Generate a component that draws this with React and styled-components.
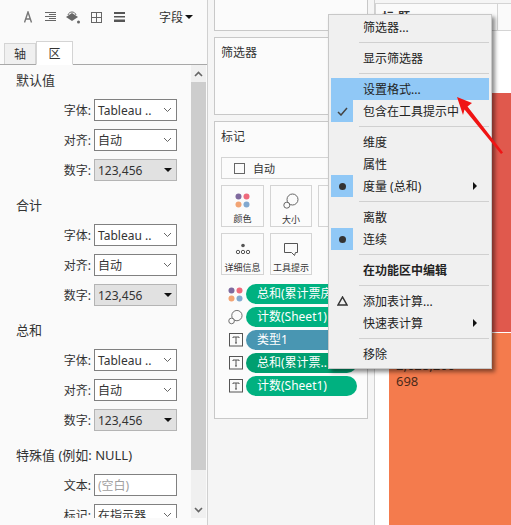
import styled, { createGlobalStyle } from 'styled-components'

const Global = createGlobalStyle`
    html, body {
        margin: 0;
        padding: 0;
        background: #f5f5f5;
    }
    body {
        font-family: "Noto Sans", "Noto Sans CJK SC", sans-serif;
        font-size: 12px;
        color: #333;
    }
`

const Page = styled.div`
    position: relative;
    width: 511px;
    height: 525px;
    overflow: hidden;
    display: flex;
`

/* left format pane */
const Pane = styled.div`
    width: 207px;
    height: 525px;
    flex: none;
    background: #fafafa;
    border-right: 1px solid #d0d0d0;
    overflow: hidden;
    display: flex;
    flex-direction: column;
`
const Toolbar = styled.div`
    height: 40px;
    box-sizing: border-box;
    flex: none;
    display: flex;
    align-items: center;
    padding: 0 14px 6px 24px;
    gap: 10px;
    color: #666;
`
const FieldMenu = styled.div`
    margin-left: auto;
    color: #333;
    display: flex;
    align-items: center;
    gap: 2px;
    white-space: nowrap;
`
const Caret = styled.span`
    display: inline-block;
    flex: none;
    width: 0;
    height: 0;
    border-left: 4px solid transparent;
    border-right: 4px solid transparent;
    border-top: 4px solid ${p => p.$color || '#111'};
`
const Tabs = styled.div`
    height: 24px;
    flex: none;
    display: flex;
    align-items: flex-end;
    padding-left: 4px;
    border-bottom: 1px solid #a8a8a8;
`
const Tab = styled.div`
    height: ${p => (p.$active ? '24px' : '21px')};
    width: ${p => (p.$active ? '37px' : '32px')};
    box-sizing: border-box;
    display: flex;
    align-items: center;
    justify-content: center;
    background: ${p => (p.$active ? '#fff' : '#f0f0f0')};
    border: 1px solid #d4d4d4;
    border-bottom: ${p => (p.$active ? '1px solid #fff' : 'none')};
    margin-bottom: ${p => (p.$active ? '-1px' : '0')};
`
const PaneBody = styled.div`
    height: 453px;
    flex: none;
    display: flex;
    overflow: hidden;
`
const Sections = styled.div`
    width: 191px;
    flex: none;
    padding-top: 6px;
    box-sizing: border-box;
`
const Section = styled.div`
    margin-bottom: 15px;
`
const SectionTitle = styled.div`
    height: 18px;
    line-height: 18px;
    font-size: 13px;
    padding-left: 16px;
    margin-bottom: 10px;
`
const Row = styled.div`
    height: 22px;
    margin-bottom: 8px;
    display: flex;
    justify-content: flex-end;
    align-items: center;
    gap: 3px;
    padding-right: 14px;
`
const Field = styled.div`
    width: 83px;
    height: 22px;
    box-sizing: border-box;
    flex: none;
    display: flex;
    align-items: center;
    justify-content: space-between;
    padding: 0 4px 0 3px;
    border: 1px solid ${p => (p.$number ? '#b4b4b4' : '#808080')};
    background: ${p => (p.$number ? '#e1e1e1' : '#fff')};
    color: ${p => (p.$muted ? '#a0a0a0' : '#333')};
    white-space: nowrap;
    overflow: hidden;
`
const Scrollbar = styled.div`
    width: 15px;
    flex: none;
    display: flex;
    flex-direction: column;
    align-items: center;
    height: 453px;
    background: #f0f0f0;
`
const ScrollArrow = styled.div`
    height: 17px;
    flex: none;
    display: flex;
    align-items: center;
    justify-content: center;
`
const ScrollThumb = styled.div`
    width: 15px;
    height: 388px;
    flex: none;
    background: #cdcdcd;
`
const ScrollGap = styled.div`
    flex: 1;
`

/* middle cards column */
const Middle = styled.div`
    width: 167px;
    flex: none;
    box-sizing: border-box;
    padding: 0 6px;
    border-right: 1px solid #d0d0d0;
    display: flex;
    flex-direction: column;
    gap: 6px;
`
const Card = styled.div`
    flex: none;
    height: ${p => p.$height}px;
    box-sizing: border-box;
    background: #fbfbfb;
    border: 1px solid #c8c8c8;
    ${p => p.$top && 'border-top: none;'}
`
const CardTitle = styled.div`
    padding: 6px 0 0 6px;
    line-height: 18px;
`
const AutoSelect = styled.div`
    margin: 11px 0 0 6px;
    height: 22px;
    width: 150px;
    box-sizing: border-box;
    border: 1px solid #d4d4d4;
    display: flex;
    align-items: center;
    gap: 8px;
    padding-left: 12px;
    font-size: 11px;
`
const CheckBox = styled.span`
    width: 9px;
    height: 9px;
    border: 1px solid #666;
`
const MarkGrid = styled.div`
    display: grid;
    grid-template-columns: 43px 42px 42px;
    grid-auto-rows: 42px;
    gap: 6px;
    margin: 6px 0 0 6px;
`
const MarkButton = styled.div`
    box-sizing: border-box;
    border: 1px solid #d4d4d4;
    display: flex;
    flex-direction: column;
    align-items: center;
    padding-top: 7px;
    font-size: 9px;
    line-height: 10px;
    white-space: nowrap;
    gap: 6px;
`
const Pills = styled.div`
    margin: 9px 0 0 13px;
    display: flex;
    flex-direction: column;
    gap: 3px;
`
const PillRow = styled.div`
    display: flex;
    align-items: center;
    gap: 3px;
    height: 20px;
`
const MarkIcon = styled.div`
    width: 15px;
    height: 15px;
    flex: none;
    display: flex;
    align-items: center;
    justify-content: center;
`
const Pill = styled.div`
    width: 111px;
    height: 20px;
    box-sizing: border-box;
    border-radius: 10px;
    background: ${p => p.$bg};
    color: #fff;
    padding-left: 11px;
    line-height: 20px;
    white-space: nowrap;
    overflow: hidden;
`

/* chart */
const View = styled.div`
    flex: 1;
    display: flex;
    flex-direction: column;
    background: #fff;
`
const ViewTop = styled.div`
    flex: none;
    padding-top: 3px;
    background: #f5f5f5;
`
const ViewHeader = styled.div`
    height: 28px;
    box-sizing: border-box;
    display: flex;
    background: #fafafa;
    border-top: 1px solid #d4d4d4;
    border-bottom: 1px solid #d4d4d4;
    border-left: 1px solid #d4d4d4;
`
const HeaderTitle = styled.div`
    flex: 1;
    padding: 4px 0 0 6px;
    font-weight: 700;
    letter-spacing: 4px;
`
const HeaderEnd = styled.div`
    width: 13px;
    flex: none;
    border-left: 1px solid #d4d4d4;
`
const HeaderGap = styled.div`
    height: 62px;
    flex: none;
`
const RedBlock = styled.div`
    height: 239px;
    flex: none;
    margin-left: 14px;
    background: #e0594d;
    border-bottom: 1px solid #fff;
`
const OrangeBlock = styled.div`
    flex: 1;
    margin-left: 14px;
    background: #f47b4d;
    padding: 24px 0 0 7px;
    color: #4a2a1a;
    font-size: 13px;
    line-height: 16px;
`

/* context menu */
const Menu = styled.div`
    position: absolute;
    left: 328px;
    top: 14px;
    width: 164px;
    height: 355px;
    box-sizing: border-box;
    padding: 1px 2px;
    background: #f0f0f0;
    border: 1px solid #c8c8c8;
    box-shadow: 3px 3px 4px rgba(0, 0, 0, 0.45);
`
const MenuItem = styled.div`
    height: 22px;
    display: flex;
    align-items: center;
    position: relative;
    background: ${p => (p.$active ? '#90c8f6' : 'transparent')};
    color: #222;
    font-weight: ${p => (p.$bold ? 700 : 400)};
`
const MenuMark = styled.div`
    width: 22px;
    height: 22px;
    flex: none;
    margin-right: 10px;
    display: flex;
    align-items: center;
    justify-content: center;
    background: ${p => (p.$on ? '#90c8f6' : 'transparent')};
`
const Dot = styled.span`
    width: 7px;
    height: 7px;
    border-radius: 50%;
    background: #333;
`
const SubArrow = styled.span`
    position: absolute;
    right: 12px;
    top: 7px;
    width: 0;
    height: 0;
    border-top: 4px solid transparent;
    border-bottom: 4px solid transparent;
    border-left: 4px solid #111;
`
const MenuLine = styled.div`
    height: 1px;
    margin: 4px 0 4px 28px;
    background: #d0d0d0;
`
const Arrow = styled.svg`
    position: absolute;
    left: 450px;
    top: 90px;
`

const Chevron = () => (
    <svg width="9" height="6" viewBox="0 0 9 6"><path d="M1 1l3.5 3.5L8 1" fill="none" stroke="#666" /></svg>
)

const ScrollChevron = ({ up }) => (
    <svg width="9" height="6" viewBox="0 0 9 6">
        <path d={up ? 'M1 5l3.5-3.5L8 5' : 'M1 1l3.5 3.5L8 1'} fill="none" stroke="#666" strokeWidth="1.6" />
    </svg>
)

const Dots = ({ size = 15 }) => (
    <svg width={size} height={size} viewBox="0 0 15 15">
        <circle cx="3.5" cy="3.5" r="3" fill="#7f6a9e" />
        <circle cx="11.5" cy="3.5" r="3" fill="#ee6a7c" />
        <circle cx="3.5" cy="11.5" r="3" fill="#f2a474" />
        <circle cx="11.5" cy="11.5" r="3" fill="#82a9d0" />
    </svg>
)

const SizeIcon = () => (
    <svg width="16" height="16" viewBox="0 0 16 16" fill="#fbfbfb" stroke="#666">
        <circle cx="9.5" cy="6.5" r="5.5" />
        <circle cx="3.8" cy="12.2" r="3" />
    </svg>
)

const TextIcon = () => (
    <svg width="14" height="14" viewBox="0 0 14 14" fill="none" stroke="#555">
        <rect x="0.5" y="0.5" width="13" height="12.5" />
        <path d="M4 4h6M7 4v6M6 10h2M4 4v1M10 4v1" />
    </svg>
)

const DetailIcon = () => (
    <svg width="16" height="16" viewBox="0 0 16 16" fill="none" stroke="#555">
        <circle cx="8" cy="4.500" r="1.800" fill="#555" stroke="none" />
        <circle cx="3" cy="11" r="1.700" />
        <circle cx="8" cy="11" r="1.700" />
        <circle cx="13" cy="11" r="1.700" />
    </svg>
)

const TooltipIcon = () => (
    <svg width="16" height="16" viewBox="0 0 16 16" fill="none" stroke="#555">
        <path d="M1.500 2.500h13v9h-2l-1 3-3-3h-7z" />
    </svg>
)

const ToolIcons = () => (
    <>
        <svg width="11" height="12" viewBox="0 0 11 12" fill="none" stroke="#777" strokeWidth="1.400">
            <path d="M.5 11.500L4 1l3.500 10.500M1.700 8h4.600" />
        </svg>
        <svg width="11" height="10" viewBox="0 0 11 10" fill="none" stroke="#666">
            <path d="M0 .5h11M4 2.500h7M0 4.500h11M4 6.500h7M0 8.500h11" />
        </svg>
        <svg width="14" height="13" viewBox="0 0 14 13">
            <path d="M0 6l6-4 6 4-6 4z" fill="#666" />
            <path d="M2 4c1-4 7-4 8 0" fill="none" stroke="#666" />
            <circle cx="12.500" cy="11" r="1.500" fill="#666" />
        </svg>
        <svg width="14" height="11" viewBox="0 0 14 11" fill="none" stroke="#666">
            <rect x="1.500" y=".5" width="10" height="10" />
            <path d="M6.500 .5v10M1.500 5.500h10" />
        </svg>
        <svg width="11" height="10" viewBox="0 0 11 10">
            <path d="M0 0h11v2H0zM0 4h11v1.500H0zM0 7.500h11V10H0z" fill="#555" />
        </svg>
    </>
)

const groups = [
    { title: '默认值', font: 'Tableau ..' },
    { title: '合计', font: 'Tableau ..' },
    { title: '总和', font: 'Tableau ..' },
]

function FormatGroup({ title, font }) {
    return (
        <Section>
            <SectionTitle>{title}</SectionTitle>
            <Row>字体:<Field>{font}<Chevron /></Field></Row>
            <Row>对齐:<Field>自动<Chevron /></Field></Row>
            <Row>数字:<Field $number>123,456<Caret /></Field></Row>
        </Section>
    )
}

const pills = [
    { icon: <Dots />, text: '总和(累计票房)', bg: '#00b180' },
    { icon: <SizeIcon />, text: '计数(Sheet1)', bg: '#00b180' },
    { icon: <TextIcon />, text: '类型1', bg: '#4996b2' },
    { icon: <TextIcon />, text: '总和(累计票..', bg: '#009f70' },
    { icon: <TextIcon />, text: '计数(Sheet1)', bg: '#00b180' },
]

export default function App() {
    return (
        <Page>
            <Global />
            <Pane>
                <Toolbar>
                    <ToolIcons />
                    <FieldMenu>字段<Caret /></FieldMenu>
                </Toolbar>
                <Tabs>
                    <Tab>轴</Tab>
                    <Tab $active>区</Tab>
                </Tabs>
                <PaneBody>
                    <Sections>
                        {groups.map(g => <FormatGroup key={g.title} {...g} />)}
                        <SectionTitle>特殊值 (例如: NULL)</SectionTitle>
                        <Row>文本:<Field $muted>(空白)</Field></Row>
                        <Row>标记:<Field>在指示器<Chevron /></Field></Row>
                    </Sections>
                    <Scrollbar>
                        <ScrollArrow><ScrollChevron up /></ScrollArrow>
                        <ScrollThumb />
                        <ScrollGap />
                        <ScrollArrow><ScrollChevron /></ScrollArrow>
                    </Scrollbar>
                </PaneBody>
            </Pane>
            <Middle>
                <Card $top $height={31} />
                <Card $height={78}>
                    <CardTitle>筛选器</CardTitle>
                </Card>
                <Card $height={298}>
                    <CardTitle>标记</CardTitle>
                    <AutoSelect><CheckBox />自动</AutoSelect>
                    <MarkGrid>
                        <MarkButton><Dots />颜色</MarkButton>
                        <MarkButton><SizeIcon />大小</MarkButton>
                        <MarkButton />
                        <MarkButton><DetailIcon />详细信息</MarkButton>
                        <MarkButton><TooltipIcon />工具提示</MarkButton>
                    </MarkGrid>
                    <Pills>
                        {pills.map((p, i) => (
                            <PillRow key={i}>
                                <MarkIcon>{p.icon}</MarkIcon>
                                <Pill $bg={p.bg}>{p.text}</Pill>
                            </PillRow>
                        ))}
                    </Pills>
                </Card>
            </Middle>
            <View>
                <ViewTop>
                    <ViewHeader>
                        <HeaderTitle>标题</HeaderTitle>
                        <HeaderEnd />
                    </ViewHeader>
                </ViewTop>
                <HeaderGap />
                <RedBlock />
                <OrangeBlock>
                    2,628,200
                    <br />
                    698
                </OrangeBlock>
            </View>
            <Menu>
                <MenuItem><MenuMark />筛选器...</MenuItem>
                <MenuLine />
                <MenuItem><MenuMark />显示筛选器</MenuItem>
                <MenuLine />
                <MenuItem $active><MenuMark />设置格式...</MenuItem>
                <MenuItem>
                    <MenuMark $on>
                        <svg width="11" height="9" viewBox="0 0 11 9"><path d="M1 5l3 3 6-7" fill="none" stroke="#444" strokeWidth="1.500" /></svg>
                    </MenuMark>
                    包含在工具提示中
                </MenuItem>
                <MenuLine />
                <MenuItem><MenuMark />维度</MenuItem>
                <MenuItem><MenuMark />属性</MenuItem>
                <MenuItem><MenuMark $on><Dot /></MenuMark>度量 (总和)<SubArrow /></MenuItem>
                <MenuLine />
                <MenuItem><MenuMark />离散</MenuItem>
                <MenuItem><MenuMark $on><Dot /></MenuMark>连续</MenuItem>
                <MenuLine />
                <MenuItem $bold><MenuMark />在功能区中编辑</MenuItem>
                <MenuLine />
                <MenuItem>
                    <MenuMark>
                        <svg width="11" height="10" viewBox="0 0 11 10"><path d="M5.500 1L1 9h9z" fill="none" stroke="#333" strokeWidth="1.500" /></svg>
                    </MenuMark>
                    添加表计算...
                </MenuItem>
                <MenuItem><MenuMark />快速表计算<SubArrow /></MenuItem>
                <MenuLine />
                <MenuItem><MenuMark />移除</MenuItem>
            </Menu>
            <Arrow width="61" height="70" viewBox="0 0 61 70">
                <path d="M7 7L22 13 17.500 16.500 53 62.500 51 64 14.500 19.500 13 25z" fill="#f01414" />
            </Arrow>
        </Page>
    )
}
